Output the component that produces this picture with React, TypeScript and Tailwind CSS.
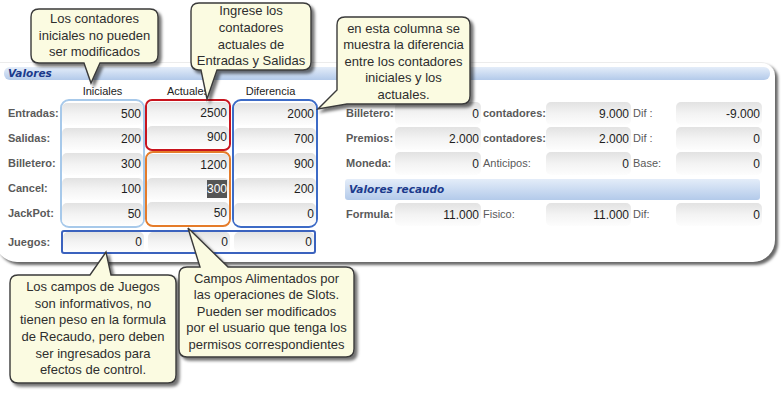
import React from "react";

interface FieldProps {
  value?: React.ReactNode;
  className?: string;
}

const Field = ({ value, className = "h-[22px] w-full" }: FieldProps) => (
  <div
    className={`${className} rounded-[5px] bg-linear-to-b from-[#e2e2e2] via-[#f3f3f3] to-[#fdfdfd] flex items-center justify-end pr-[2px] text-[12px] text-[#1e1e1e]`}
  >
    {value}
  </div>
);

const Cell = ({ value, h = "h-[25px]" }: { value: React.ReactNode; h?: string }) => (
  <div className={`${h} flex items-center`}>
    <Field value={value} />
  </div>
);

const SectionBar = ({ title, className }: { title: string; className: string }) => (
  <div
    className={`${className} bg-linear-to-b from-[#e4edf9] to-[#b3caea] flex items-center pl-[4px] font-['DejaVu_Sans',Verdana,sans-serif] font-bold italic text-[10.5px] text-[#1b3a8c]`}
  >
    {title}
  </div>
);

const rightRows = [
  ["Billetero:", "0", "contadores:", "9.000", "Dif :", "-9.000"],
  ["Premios:", "2.000", "contadores:", "2.000", "Dif :", "0"],
  ["Moneda:", "0", "Anticipos:", "0", "Base:", "0"],
];

const RightRow = ({ row }: { row: string[] }) => (
  <div className="h-[25px] flex items-center text-[11px] text-[#5a5a5a]">
    <div className="w-[49px] font-bold">{row[0]}</div>
    <div className="w-[86px]">
      <Field value={row[1]} className="h-[23px] w-full" />
    </div>
    <div className={`w-[65px] pl-[2px] ${row[2] === "contadores:" ? "font-bold" : ""}`}>{row[2]}</div>
    <div className="w-[85px]">
      <Field value={row[3]} className="h-[23px] w-full" />
    </div>
    <div className="w-[45px] pl-[2px]">{row[4]}</div>
    <div className="w-[86px]">
      <Field value={row[5]} className="h-[23px] w-full" />
    </div>
  </div>
);

const bubbles = [
  "M39,9 H150 Q158,9 158,17 V55 Q158,63 150,63 H100 L91,83 L84,63 H39 Q31,63 31,55 V17 Q31,9 39,9 Z",
  "M199,3 H303 Q311,3 311,11 V62 Q311,70 303,70 H217 L207,99 L201,70 H199 Q191,70 191,62 V11 Q191,3 199,3 Z",
  "M345,17 H462 Q470,17 470,25 V96 Q470,104 462,104 H347 L318,109 L337,90 V25 Q337,17 345,17 Z",
  "M18,275 H90 L106,252 L111,275 H168 Q176,275 176,283 V375 Q176,383 168,383 H18 Q10,383 10,375 V283 Q10,275 18,275 Z",
  "M187,267 H200 L188,228 L228,267 H346 Q354,267 354,275 V349 Q354,357 346,357 H187 Q179,357 179,349 V275 Q179,267 187,267 Z",
];

const BubbleText = ({ lines, className }: { lines: string[]; className: string }) => (
  <div
    className={`absolute ${className} flex flex-col items-center justify-center text-center text-[13px] leading-[16.6px] text-[#2e2e2e]`}
  >
    {lines.map((l) => (
      <div key={l} className="whitespace-nowrap">
        {l}
      </div>
    ))}
  </div>
);

export default function App() {
  const labels = ["Entradas:", "Salidas:", "Billetero:", "Cancel:", "JackPot:"];
  return (
    <div className="relative w-[781px] h-[409px] overflow-hidden bg-white font-['Liberation_Sans',Arial,sans-serif]">
      <div className="mt-[62px] -ml-[5px] w-[780px] h-[200px] border-t border-[#ececec] rounded-tr-[14px] rounded-br-[22px] rounded-bl-[22px] bg-white shadow-[3px_3px_3px_rgba(0,0,0,0.6)]">
        <div className="pl-[5px]">
          <SectionBar title="Valores" className="mt-[4px] ml-[4px] mr-[5px] h-[13px] rounded-[6px]" />
          <div className="flex">
            {/* contadores */}
            <div className="flex flex-col">
              <div className="mt-[4px] h-[15px] flex items-center text-[11px] text-[#222]">
                <div className="w-[60px]" />
                <div className="w-[85px] text-center">Iniciales</div>
                <div className="w-[86px] text-center">Actuales</div>
                <div className="w-[87px] text-center pr-[8px]">Diferencia</div>
              </div>
              <div className="flex">
                <div className="w-[60px] pt-[2px] flex flex-col">
                  {labels.map((l) => (
                    <div key={l} className="h-[25px] flex items-center pl-[8px] text-[11px] font-bold text-[#5a5a5a]">
                      {l}
                    </div>
                  ))}
                </div>
                <div className="w-[85px] border-2 border-[#a7c9ea] rounded-[9px] flex flex-col">
                  {["500", "200", "300", "100", "50"].map((v, i) => (
                    <Cell key={i} value={v} />
                  ))}
                </div>
                <div className="w-[86px] flex flex-col">
                  <div className="border-2 border-[#c8141e] rounded-[7px] flex flex-col">
                    <Cell value="2500" h="h-[24px]" />
                    <Cell value="900" h="h-[24px]" />
                  </div>
                  <div className="border-2 border-[#e57c2a] rounded-[8px] flex flex-col">
                    <Cell value="1200" h="h-[24px]" />
                    <Cell value={<span className="bg-[#555] text-white">300</span>} h="h-[24px]" />
                    <Cell value="50" h="h-[24px]" />
                  </div>
                </div>
                <div className="w-[86px] ml-[1px] border-2 border-[#3d6bc6] rounded-[9px] flex flex-col">
                  {["2000", "700", "900", "200", "0"].map((v, i) => (
                    <Cell key={i} value={v} />
                  ))}
                </div>
              </div>
              <div className="mt-[2px] flex items-center">
                <div className="w-[60px] pl-[8px] text-[11px] font-bold text-[#5a5a5a]">Juegos:</div>
                <div className="ml-[1px] w-[255px] h-[24px] border-2 border-[#3b62be] rounded-[3px] flex items-center gap-[4px]">
                  <Field value="0" className="h-[20px] w-[81px]" />
                  <Field value="0" className="h-[20px] w-[82px]" />
                  <Field value="0" className="h-[20px] flex-1" />
                </div>
              </div>
            </div>

            {/* totales */}
            <div className="ml-[28px] pt-[21px] flex flex-col">
              {rightRows.map((r) => (
                <RightRow key={r[0]} row={r} />
              ))}
              <SectionBar title="Valores recaudo" className="mt-[3px] -ml-[1px] w-[415px] h-[21px] rounded-[3px]" />
              <div className="mt-[2px]">
                <RightRow row={["Formula:", "11.000", "Fisico:", "11.000", "Dif:", "0"]} />
              </div>
            </div>
          </div>
        </div>
      </div>

      <svg className="absolute inset-0 pointer-events-none" width="781" height="409">
        <defs>
          <filter id="bubble-shadow" x="-10%" y="-10%" width="130%" height="130%">
            <feDropShadow dx="3" dy="3" stdDeviation="1.5" floodColor="#000" floodOpacity="0.55" />
          </filter>
        </defs>
        {bubbles.map((d) => (
          <path key={d} d={d} fill="#fbfbe1" stroke="#3a3a3a" strokeWidth="1.4" filter="url(#bubble-shadow)" />
        ))}
      </svg>

      <BubbleText className="left-[31px] top-[9px] w-[127px] h-[54px]" lines={["Los contadores", "iniciales no pueden", "ser modificados"]} />
      <BubbleText
        className="left-[191px] top-[3px] w-[120px] h-[67px]"
        lines={["Ingrese los", "contadores", "actuales de", "Entradas y Salidas"]}
      />
      <BubbleText
        className="left-[337px] top-[20px] w-[133px] h-[84px]"
        lines={["en esta columna se", "muestra la diferencia", "entre los contadores", "iniciales y los", "actuales."]}
      />
      <BubbleText
        className="left-[10px] top-[275px] w-[166px] h-[108px]"
        lines={[
          "Los campos de Juegos",
          "son informativos, no",
          "tienen peso en la formula",
          "de Recaudo, pero deben",
          "ser ingresados para",
          "efectos de control.",
        ]}
      />
      <BubbleText
        className="left-[179px] top-[267px] w-[175px] h-[90px]"
        lines={[
          "Campos Alimentados por",
          "las operaciones de Slots.",
          "Pueden ser modificados",
          "por el usuario que tenga los",
          "permisos correspondientes",
        ]}
      />
    </div>
  );
}
